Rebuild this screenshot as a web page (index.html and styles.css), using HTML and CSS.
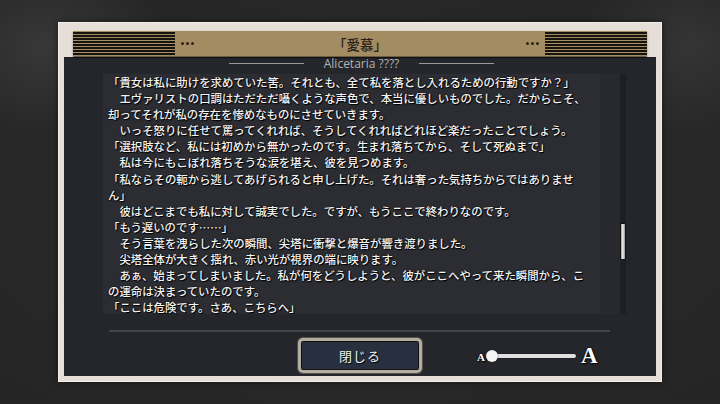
FILE: index.html
```html
<!DOCTYPE html>
<html lang="ja">
<head>
<meta charset="utf-8">
<link rel="stylesheet" href="styles.css">
</head>
<body>
<div class="frame">
  <div class="header">
    <div class="stripes"></div>
    <div class="dots"><i></i><i></i><i></i></div>
    <div class="title">「愛慕」</div>
    <div class="dots"><i></i><i></i><i></i></div>
    <div class="stripes"></div>
  </div>
  <div class="panel">
    <div class="subtitle">
      <span class="rule"></span>
      <span class="name">Alicetaria ????</span>
      <span class="rule"></span>
    </div>
    <div class="content">
      <div class="textbox">
        <div class="line">「貴女は私に助けを求めていた筈。それとも、全て私を落とし入れるための行動ですか？」</div>
        <div class="line">　エヴァリストの口調はただただ囁くような声色で、本当に優しいものでした。だからこそ、</div>
        <div class="line">却ってそれが私の存在を惨めなものにさせていきます。</div>
        <div class="line">　いっそ怒りに任せて罵ってくれれば、そうしてくれればどれほど楽だったことでしょう。</div>
        <div class="line">「選択肢など、私には初めから無かったのです。生まれ落ちてから、そして死ぬまで」</div>
        <div class="line">　私は今にもこぼれ落ちそうな涙を堪え、彼を見つめます。</div>
        <div class="line">「私ならその軛から逃してあげられると申し上げた。それは奢った気持ちからではありませ</div>
        <div class="line">ん」</div>
        <div class="line">　彼はどこまでも私に対して誠実でした。ですが、もうここで終わりなのです。</div>
        <div class="line">「もう遅いのです……」</div>
        <div class="line">　そう言葉を洩らした次の瞬間、尖塔に衝撃と爆音が響き渡りました。</div>
        <div class="line">　尖塔全体が大きく揺れ、赤い光が視界の端に映ります。</div>
        <div class="line">　あぁ、始まってしまいました。私が何をどうしようと、彼がここへやって来た瞬間から、こ</div>
        <div class="line">の運命は決まっていたのです。</div>
        <div class="line">「ここは危険です。さあ、こちらへ」</div>
      </div>
      <div class="scroll">
        <div class="track"><div class="thumb"></div></div>
      </div>
    </div>
    <div class="divider"></div>
    <div class="bottom">
      <div class="btn">閉じる</div>
      <div class="sizer">
        <span class="a-small">A</span>
        <div class="slider"><span class="knob"></span></div>
        <span class="a-big">A</span>
      </div>
    </div>
  </div>
</div>
</body>
</html>
```

FILE: styles.css
```css
* { box-sizing: border-box; }
html, body { margin: 0; padding: 0; }
body {
  width: 720px;
  height: 404px;
  overflow: hidden;
  padding: 22px 0 0 58px;
  background:
    radial-gradient(ellipse 120px 90px at 45px 45px, rgba(70,70,70,0.55), rgba(70,70,70,0) 100%),
    radial-gradient(ellipse 110px 90px at 690px 45px, rgba(70,70,70,0.45), rgba(70,70,70,0) 100%),
    radial-gradient(ellipse 500px 260px at 360px 200px, #2d2d2d, #252525 100%);
  font-family: "Noto Sans CJK JP", "Noto Sans", sans-serif;
}
.frame {
  width: 604px;
  height: 360px;
  background: #e5dfd8;
  border: 1px solid #f3efe9;
  padding: 8px 5px 5px;
  display: flex;
  flex-direction: column;
  box-shadow: 0 0 6px rgba(0,0,0,0.5);
}
.header {
  height: 26px;
  margin: 0 9px;
  background: #a38b62;
  border-radius: 2px;
  border-bottom: 1px solid #6e5d40;
  display: flex;
  align-items: center;
  box-shadow: 0 1px 2px rgba(0,0,0,0.5);
  position: relative;
  z-index: 1;
}
.stripes {
  width: 102px;
  height: 25px;
  background: repeating-linear-gradient(180deg, #a38b62 0, #a38b62 1.4px, #17140f 1.4px, #17140f 3px);
}
.dots {
  display: flex;
  gap: 2px;
  margin: 0 6px;
}
.dots i {
  width: 3px;
  height: 3px;
  background: #2a2218;
  border-radius: 50%;
}
.title {
  flex: 1;
  text-align: center;
  font-size: 13.5px;
  color: #2b2216;
  font-weight: 500;
  line-height: 26px;
}
.panel {
  flex: 1;
  background: #25262b;
  display: flex;
  flex-direction: column;
  border-top: 1px solid #1c1d20;
}
.subtitle {
  height: 11px;
  display: flex;
  align-items: center;
  justify-content: center;
  gap: 20px;
  margin-left: 3px;
}
.rule {
  width: 75px;
  height: 1px;
  background: #9a9a9a;
}
.name {
  font-family: "Open Sans", "Noto Sans", sans-serif;
  font-size: 12px;
  line-height: 11px;
  color: #b4b4b4;
}
.content {
  margin-top: 5px;
  height: 240px;
  display: flex;
  margin-left: 39px;
}
.textbox {
  width: 497px;
  height: 240px;
  overflow: hidden;
  background: #2c2d33;
  padding: 0 0 0 5px;
}
.line {
  white-space: pre;
  font-size: 11.4px;
  line-height: 16.1px;
  height: 16.1px;
  color: #f4f4f4;
  font-weight: 500;
  text-shadow: 1px 1px 1px #000, 0 0 2px #000;
}
.scroll {
  width: 26px;
  height: 240px;
  background: #28292e;
  display: flex;
  justify-content: flex-end;
}
.track {
  width: 6px;
  height: 240px;
  background: #1e1f23;
  padding-top: 149px;
}
.thumb {
  width: 6px;
  height: 37px;
  background: linear-gradient(90deg, #9a9a9a, #e4e4e4 40%, #cfcfcf 70%, #8c8c8c);
  border: 1px solid #111;
  border-radius: 1px;
}
.divider {
  margin: 16px 0 0 45px;
  width: 501px;
  height: 2px;
  background: #43464e;
}
.bottom {
  margin-top: 6px;
  height: 35px;
  display: flex;
  align-items: center;
  padding-left: 234px;
}
.btn {
  width: 124px;
  height: 35px;
  border-radius: 5px;
  border: 3px solid #b3ae9f;
  background: #283040;
  box-shadow: inset 0 0 0 1px #111, 0 0 0 1px #55524a;
  color: #f0f0f0;
  font-size: 13px;
  letter-spacing: 1px;
  display: flex;
  align-items: center;
  justify-content: center;
  text-shadow: 1px 1px 1px #000;
}
.sizer {
  margin-left: 55px;
  display: flex;
  align-items: center;
  height: 35px;
}
.a-small, .a-big {
  font-family: "Liberation Serif", "DejaVu Serif", serif;
  font-weight: bold;
  color: #fff;
  text-shadow: 1px 1px 1px #000, 0 0 2px #000;
}
.a-small {
  font-size: 11px;
  margin-top: 2px;
}
.a-big {
  font-size: 23px;
  margin-left: 5px;
}
.slider {
  width: 89px;
  height: 4px;
  margin-left: 2px;
  background: #e0e0e0;
  border-radius: 2px;
  box-shadow: 0 0 1px #000;
  position: relative;
}
.knob {
  position: absolute;
  left: -1px;
  top: -4px;
  width: 12px;
  height: 12px;
  border-radius: 50%;
  background: #f4f4f4;
  box-shadow: 0 0 1px #000;
}
```
